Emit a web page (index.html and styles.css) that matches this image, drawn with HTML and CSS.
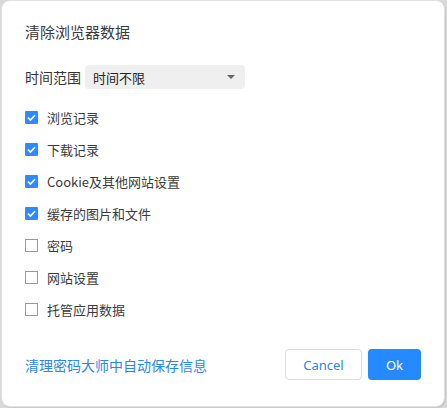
FILE: index.html
```html
<!DOCTYPE html>
<html lang="zh-CN">
<head>
<meta charset="utf-8">
<title>清除浏览器数据</title>
<link rel="stylesheet" href="styles.css">
</head>
<body>
<div class="dialog">
  <div class="title">清除浏览器数据</div>
  <div class="range">
    <span class="range-label">时间范围</span>
    <div class="select"><span>时间不限</span><span class="arrow"></span></div>
  </div>
  <ul class="list">
    <li class="row"><span class="cb on"><svg viewBox="0 0 13 13"><path d="M3 6.6 L5.4 9 L10 4.3" fill="none" stroke="#fff" stroke-width="1.6"/></svg></span>浏览记录</li>
    <li class="row"><span class="cb on"><svg viewBox="0 0 13 13"><path d="M3 6.6 L5.4 9 L10 4.3" fill="none" stroke="#fff" stroke-width="1.6"/></svg></span>下载记录</li>
    <li class="row"><span class="cb on"><svg viewBox="0 0 13 13"><path d="M3 6.6 L5.4 9 L10 4.3" fill="none" stroke="#fff" stroke-width="1.6"/></svg></span>Cookie及其他网站设置</li>
    <li class="row"><span class="cb on"><svg viewBox="0 0 13 13"><path d="M3 6.6 L5.4 9 L10 4.3" fill="none" stroke="#fff" stroke-width="1.6"/></svg></span>缓存的图片和文件</li>
    <li class="row"><span class="cb"></span>密码</li>
    <li class="row"><span class="cb"></span>网站设置</li>
    <li class="row"><span class="cb"></span>托管应用数据</li>
  </ul>
  <div class="footer">
    <a class="link" href="#">清理密码大师中自动保存信息</a>
    <div class="buttons">
      <button class="btn cancel">Cancel</button>
      <button class="btn ok">Ok</button>
    </div>
  </div>
</div>
</body>
</html>
```

FILE: styles.css
```css
html, body {
  margin: 0;
  padding: 0;
}
body {
  width: 447px;
  height: 408px;
  background: #d9d9d9;
  font-family: "Noto Sans CJK SC", "Noto Sans", sans-serif;
  color: #333;
  overflow: hidden;
}
.dialog {
  box-sizing: border-box;
  margin: 1px 3px 0 2px;
  height: 405px;
  background: #fff;
  border-radius: 8px;
  box-shadow: 0 0 0 1px #e2e2e2, 1px 1px 2px rgba(0,0,0,0.25);
  padding: 21px 23px 0 23px;
  display: flex;
  flex-direction: column;
}
.title {
  font-size: 15px;
  line-height: 20px;
  height: 20px;
  color: #3a3a3a;
}
.range {
  margin-top: 23px;
  display: flex;
  align-items: center;
  height: 24px;
}
.range-label {
  font-size: 14px;
  line-height: 24px;
  width: 60px;
}
.select {
  width: 160px;
  height: 24px;
  box-sizing: border-box;
  background: #efefef;
  border-radius: 4px;
  display: flex;
  align-items: center;
  justify-content: space-between;
  padding: 0 8px 0 8px;
  font-size: 13px;
  color: #222;
}
.arrow {
  width: 0;
  height: 0;
  border-left: 4px solid transparent;
  border-right: 4px solid transparent;
  border-top: 4px solid #666;
  margin-right: 2px;
}
.list {
  list-style: none;
  margin: 12px 0 0 0;
  padding: 0;
}
.row {
  height: 32px;
  display: flex;
  align-items: center;
  font-size: 13px;
  color: #3a3a3a;
}
.cb {
  box-sizing: border-box;
  width: 13px;
  height: 13px;
  border: 1px solid #999;
  background: #fff;
  margin-right: 9px;
  display: flex;
  flex: none;
}
.cb.on {
  border: none;
  background: #2c8cff;
  border-radius: 1px;
}
.cb svg {
  width: 13px;
  height: 13px;
}
.footer {
  margin-top: 24px;
  display: flex;
  align-items: center;
  justify-content: space-between;
  height: 31px;
}
.link {
  font-size: 14px;
  color: #2a86e8;
  text-decoration: none;
}
.buttons {
  display: flex;
  gap: 6px;
}
.btn {
  font-family: "Noto Sans", "Noto Sans CJK SC", sans-serif;
  font-size: 13px;
  height: 31px;
  border-radius: 4px;
  padding: 0;
  cursor: pointer;
}
.cancel {
  width: 77px;
  background: #fff;
  border: 1px solid #dcdcdc;
  color: #2a86e8;
}
.ok {
  width: 53px;
  background: #2589ff;
  border: none;
  color: #fff;
}
```
